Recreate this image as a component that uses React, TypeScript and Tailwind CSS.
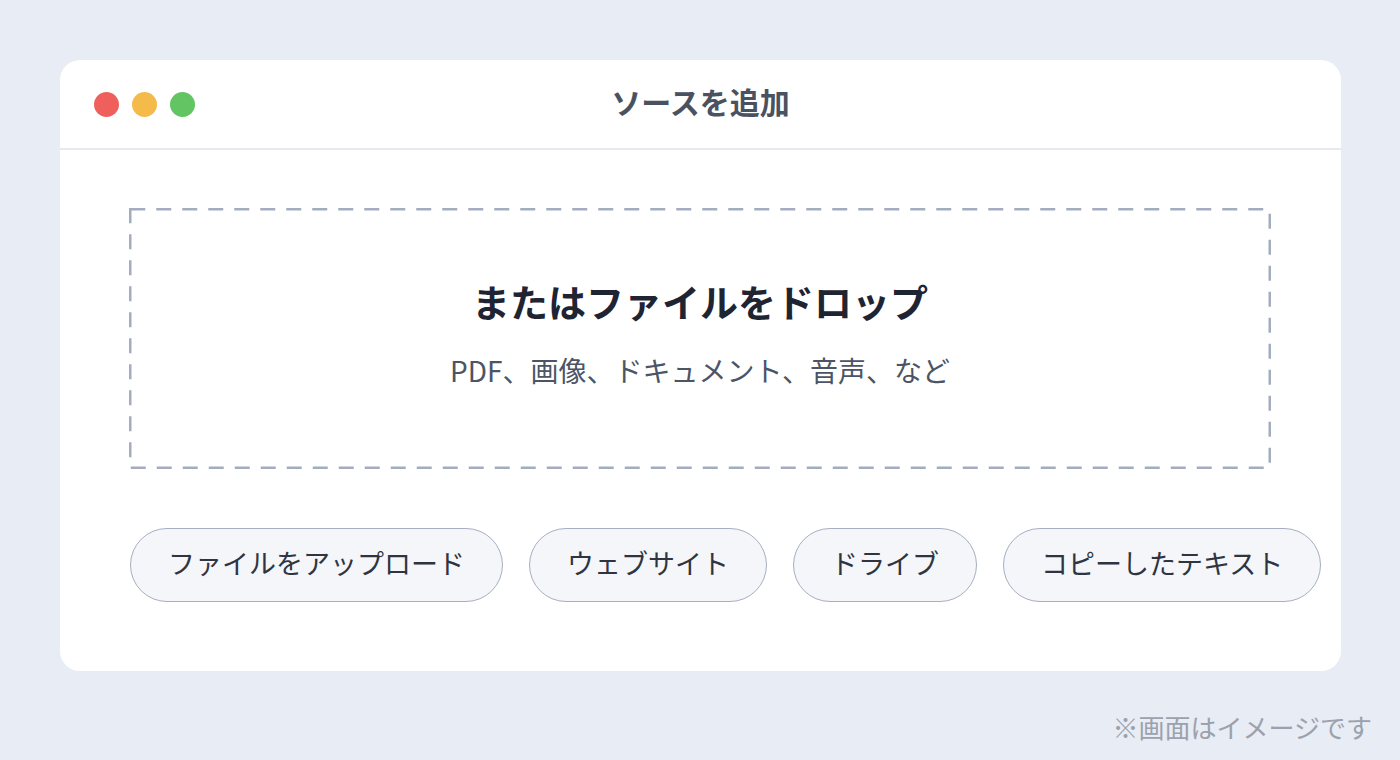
import React from "react";

const font = { fontFamily: '"Noto Sans CJK JP", "Noto Sans", sans-serif' };

function Pill({ label }: { label: string }) {
  return (
    <div className="flex h-[74px] shrink-0 items-center whitespace-nowrap rounded-full border-[1.5px] border-[#a7aec1] bg-[#f4f6fa] px-[37px] pb-[5px] text-[27px] leading-none text-[#2f3440]">
      {label}
    </div>
  );
}

export default function App() {
  return (
    <div
      className="flex h-[760px] w-[1400px] flex-col overflow-hidden bg-[#e8ecf4] pt-[60px]"
      style={font}
    >
      <div className="mx-[60px] w-[1281px] rounded-[20px] bg-white">
        <div className="grid h-[90px] grid-cols-[1fr_auto_1fr] items-center border-b-2 border-[#e6e9ee] px-[34px] pb-[2px]">
          <div className="flex items-center gap-[13px] pt-[2px]">
            <span className="h-[25px] w-[25px] rounded-full bg-[#ef605d]" />
            <span className="h-[25px] w-[25px] rounded-full bg-[#f4bb4a]" />
            <span className="h-[25px] w-[25px] rounded-full bg-[#63c463]" />
          </div>
          <div className="pb-[4px] text-[30px] font-bold leading-none text-[#4a5261]">
            ソースを追加
          </div>
          <div />
        </div>
        <div className="px-[69px] pb-[69px] pt-[58px]">
          <div className="relative flex h-[261px] w-[1142px] flex-col items-center pt-[69px]">
            <svg
              className="absolute inset-0"
              width="1142"
              height="261"
              viewBox="0 0 1142 261"
            >
              <rect
                x="1.25"
                y="1.25"
                width="1139.5"
                height="258.5"
                fill="none"
                stroke="#a4acbf"
                strokeWidth="2.5"
                strokeDasharray="15 11"
              />
            </svg>
            <div className="text-[38px] font-bold leading-[48px] text-[#1f2433]">
              またはファイルをドロップ
            </div>
            <div className="mt-[25px] text-[28px] leading-[40px] text-[#4b5566]">
              PDF、画像、ドキュメント、音声、など
            </div>
          </div>
          <div className="mt-[59px] flex w-[1200px] gap-[26px] pl-[1px]">
            <Pill label="ファイルをアップロード" />
            <Pill label="ウェブサイト" />
            <Pill label="ドライブ" />
            <Pill label="コピーしたテキスト" />
          </div>
        </div>
      </div>
      <div className="mt-[38px] pr-[28px] text-right text-[26px] leading-[36px] text-[#9ba1ad]">
        ※画面はイメージです
      </div>
    </div>
  );
}
